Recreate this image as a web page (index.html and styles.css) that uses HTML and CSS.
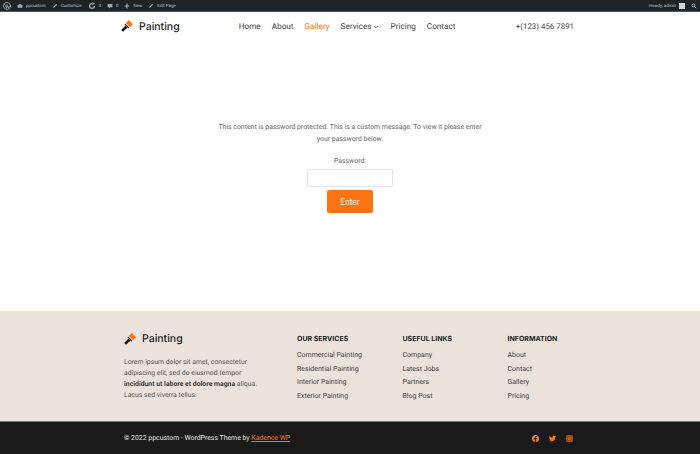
FILE: index.html
```html
<!DOCTYPE html>
<html lang="en">
<head>
  <meta charset="UTF-8" />
  <title>Painting</title>
  <link rel="stylesheet" href="styles.css">
</head>
<body>
  <div class="adminbar">
    <div class="adminbar-left">
      <span class="ab-item ab-logo">
        <svg class="ab-wp" viewBox="0 0 20 20"><circle cx="10" cy="10" r="9" fill="none" stroke="#a7aaad" stroke-width="2"/><path d="M5 6l4 10 1.500-4-1.500-5M10 6l4 10 2-6" fill="none" stroke="#a7aaad" stroke-width="2"/></svg>
      </span>
      <span class="ab-item">
        <svg class="ab-icon" viewBox="0 0 20 20"><path d="M2 6h4l1-2h6l1 2h4v10H2z" fill="#a7aaad"/></svg>
        ppcustom
      </span>
      <span class="ab-item">
        <svg class="ab-icon" viewBox="0 0 20 20"><path d="M3 17l2-5 9-9 3 3-9 9z" fill="#a7aaad"/></svg>
        Customize
      </span>
      <span class="ab-item">
        <svg class="ab-icon ab-wide" viewBox="0 0 20 20"><path d="M10 4a6 6 0 1 0 6 6" fill="none" stroke="#a7aaad" stroke-width="3"/><path d="M11 0l6 4-6 4z" fill="#a7aaad"/></svg>
        3
      </span>
      <span class="ab-item">
        <svg class="ab-icon" viewBox="0 0 20 20"><path d="M2 3h16v11h-7l-4 4v-4H2z" fill="#a7aaad"/></svg>
        0
      </span>
      <span class="ab-item">
        <svg class="ab-icon" viewBox="0 0 20 20"><path d="M8 2h4v6h6v4h-6v6H8v-6H2V8h6z" fill="#a7aaad"/></svg>
        New
      </span>
      <span class="ab-item">
        <svg class="ab-icon" viewBox="0 0 20 20"><path d="M3 17l2-5 9-9 3 3-9 9z" fill="#a7aaad"/></svg>
        Edit Page
      </span>
    </div>
    <div class="adminbar-right">
      <span class="ab-item">Howdy, admin <span class="ab-avatar"></span></span>
      <svg class="ab-search" viewBox="0 0 20 20"><circle cx="8" cy="8" r="5" fill="none" stroke="#a7aaad" stroke-width="3"/><path d="M12 12l6 6" stroke="#a7aaad" stroke-width="3"/></svg>
    </div>
  </div>

  <header class="site-header">
    <div class="wrap header-row">
      <a class="logo" href="#">
        <svg class="logo-icon" viewBox="0 0 20 20"><path d="M8 5l5-5 7 7-5 5z" fill="#ff7410"/><path d="M7 6l7 7-1.500 1-6.500-6.500z" fill="#1a1a1a"/><path d="M7 9l4 4-2 1-3-3z" fill="#1a1a1a"/><path d="M7 10l3 3-6 6c-1 1-4-2-3-3z" fill="#1a1a1a"/></svg>
        Painting
      </a>
      <nav class="main-nav">
        <a href="#">Home</a>
        <a href="#">About</a>
        <a class="current" href="#">Gallery</a>
        <a href="#">Services <svg class="chev" viewBox="0 0 10 10"><path d="M2 3.500l3 3 3-3" fill="none" stroke="#444" stroke-width="1.300"/></svg></a>
        <a href="#">Pricing</a>
        <a href="#">Contact</a>
      </nav>
      <div class="phone">+(123) 456 7891</div>
    </div>
  </header>

  <main class="content">
    <form class="pw-form">
      <p class="pw-msg">This content is password protected. This is a custom message. To view it please enter your password below.</p>
      <label class="pw-label" for="pw">Password:</label>
      <input class="pw-input" type="password" id="pw" />
      <button class="pw-btn" type="button">Enter</button>
    </form>
  </main>

  <footer>
    <div class="footer-top">
      <div class="wrap footer-grid">
        <div class="footer-about">
          <a class="logo" href="#">
            <svg class="logo-icon" viewBox="0 0 20 20"><path d="M8 5l5-5 7 7-5 5z" fill="#ff7410"/><path d="M7 6l7 7-1.500 1-6.500-6.500z" fill="#1a1a1a"/><path d="M7 9l4 4-2 1-3-3z" fill="#1a1a1a"/><path d="M7 10l3 3-6 6c-1 1-4-2-3-3z" fill="#1a1a1a"/></svg>
            Painting
          </a>
          <p>Lorem ipsum dolor sit amet, consectetur adipiscing elit, sed do eiusmod tempor <strong>incididunt ut labore et dolore magna</strong> aliqua. Lacus sed viverra tellus.</p>
        </div>
        <div class="footer-col">
          <h4>OUR SERVICES</h4>
          <a href="#">Commercial Painting</a>
          <a href="#">Residential Painting</a>
          <a href="#">Interior Painting</a>
          <a href="#">Exterior Painting</a>
        </div>
        <div class="footer-col">
          <h4>USEFUL LINKS</h4>
          <a href="#">Company</a>
          <a href="#">Latest Jobs</a>
          <a href="#">Partners</a>
          <a href="#">Blog Post</a>
        </div>
        <div class="footer-col">
          <h4>INFORMATION</h4>
          <a href="#">About</a>
          <a href="#">Contact</a>
          <a href="#">Gallery</a>
          <a href="#">Pricing</a>
        </div>
      </div>
    </div>
    <div class="footer-bottom">
      <div class="wrap bottom-row">
        <div class="copy">© 2022 ppcustom - WordPress Theme by <a href="#">Kadence WP</a></div>
        <div class="social">
          <svg viewBox="0 0 20 20"><circle cx="10" cy="10" r="10" fill="#ff7410"/><path d="M11 20v-8h3l.5-3H11V7.500c0-1 .5-1.500 1.500-1.500H14.500V3.200C13 3 9 2.500 8 6.500V9H5.500v3H8v8z" fill="#1a1a1a"/></svg>
          <svg viewBox="0 0 20 20"><path d="M20 4c-.7.300-1.500.5-2.300.6.800-.5 1.500-1.300 1.800-2.200-.8.500-1.700.8-2.600 1A4 4 0 0 0 10 7.100C6.700 7 3.700 5.400 1.400 2.800c-1 1.800-.5 4 1.200 5.300-.6 0-1.200-.2-1.800-.5 0 1.900 1.400 3.600 3.200 4-.6.200-1.200.2-1.800.1.500 1.600 2 2.700 3.800 2.800A8 8 0 0 1 0 16.100 11.500 11.500 0 0 0 18 6c.8-.5 1.500-1.200 2-2z" fill="#ff7410"/></svg>
          <svg viewBox="0 0 20 20"><rect x="1" y="1" width="18" height="18" rx="4" fill="none" stroke="#ff7410" stroke-width="2"/><rect x="3" y="3" width="14" height="14" fill="#ff7410" opacity=".55"/><circle cx="10" cy="10" r="4" fill="none" stroke="#ff7410" stroke-width="2"/></svg>
        </div>
      </div>
    </div>
  </footer>
</body>
</html>
```

FILE: styles.css
```css
* {
  box-sizing: border-box;
  margin: 0;
  padding: 0;
}
body {
  background-color: #fff;
  color: #4a4a4a;
  font-family: Roboto, "Liberation Sans", sans-serif;
  text-rendering: geometricPrecision;
  display: flex;
  flex-direction: column;
  height: 454px;
  overflow: hidden;
}
a {
  color: inherit;
  text-decoration: none;
}
.wrap {
  width: 453px;
  margin-left: 121px;
}

/* admin bar */
.adminbar {
  height: 12px;
  flex: none;
  background-color: #1d2327;
  border-bottom: 1px solid #50555a;
  color: #c3c4c7;
  font-size: 4.400px;
  display: flex;
  justify-content: space-between;
  align-items: center;
  padding: 1px 3px 0;
}
.adminbar-left, .adminbar-right {
  display: flex;
  align-items: center;
}
.adminbar-left {
  gap: 6px;
}
.ab-item {
  display: flex;
  align-items: center;
  gap: 3px;
}
.ab-wp {
  width: 8px;
  height: 8px;
}
.ab-icon {
  width: 6px;
  height: 6px;
}
.ab-wide {
  width: 8px;
  height: 8px;
}
.ab-avatar {
  width: 6px;
  height: 6px;
  background-color: #d5d5d5;
}
.ab-search {
  width: 6px;
  height: 6px;
  margin-left: 6px;
}

/* header */
.site-header {
  flex: none;
  height: 28px;
}
.header-row {
  height: 100%;
  display: flex;
  align-items: center;
}
.logo {
  display: flex;
  align-items: center;
  gap: 6px;
  font-family: Inter, Roboto, sans-serif;
  font-weight: 500;
  font-size: 10.500px;
  color: #1c1c1c;
}
.logo-icon {
  width: 12px;
  height: 12px;
}
.main-nav {
  display: flex;
  align-items: center;
  gap: 11px;
  font-size: 8.200px;
  margin-left: 59px;
  padding-top: 1px;
  color: #444;
}
.main-nav a {
  display: flex;
  align-items: center;
}
.main-nav .current {
  color: #ff7410;
}
.chev {
  width: 6px;
  height: 6px;
  margin-left: 2px;
}
.phone {
  margin-left: auto;
  font-size: 7.900px;
  color: #444;
}

/* password form */
.content {
  flex: 1;
  display: flex;
  justify-content: center;
  padding-top: 81px;
}
.pw-form {
  width: 270px;
  display: flex;
  flex-direction: column;
  align-items: center;
  text-align: center;
  font-size: 6.900px;
  color: #666;
}
.pw-msg {
  line-height: 12px;
  margin-bottom: 10px;
}
.pw-label {
  line-height: 12px;
  margin-bottom: 2px;
}
.pw-input {
  width: 86px;
  height: 18px;
  border: 1px solid #e2e5ea;
  border-radius: 1px;
  margin-bottom: 3px;
}
.pw-btn {
  width: 46px;
  height: 23px;
  background-color: #ff7410;
  color: #fff;
  border: none;
  border-radius: 2px;
  font-family: Roboto, sans-serif;
  font-size: 8.200px;
  cursor: pointer;
}

/* footer */
.footer-top {
  height: 110px;
  background-color: #ebe2dc;
  padding-top: 21px;
}
.footer-grid {
  display: grid;
  grid-template-columns: 176px 105.500px 105px 1fr;
}
.footer-about {
  padding-left: 3px;
}
.footer-about p {
  font-size: 6.850px;
  line-height: 11px;
  margin-top: 12px;
  width: 138px;
  color: #555;
}
.footer-about strong {
  color: #3b3b3b;
}
.footer-col {
  padding-top: 1px;
  display: flex;
  flex-direction: column;
  font-size: 7px;
  color: #444;
}
.footer-col h4 {
  font-family: Inter, Roboto, sans-serif;
  font-size: 7px;
  font-weight: 700;
  color: #222;
  line-height: 12px;
  margin-bottom: 4px;
}
.footer-col a {
  line-height: 13.700px;
}
.footer-bottom {
  height: 33px;
  background-color: #1a1a1a;
  border-top: 1px solid #777;
}
.bottom-row {
  height: 100%;
  display: flex;
  justify-content: space-between;
  align-items: center;
  padding: 0 1px 0 3px;
}
.copy {
  font-size: 6.900px;
  color: #e6e6e6;
}
.copy a {
  color: #ff7410;
  text-decoration: underline;
}
.social {
  display: flex;
  gap: 10px;
}
.social svg {
  width: 7px;
  height: 7px;
}
```
